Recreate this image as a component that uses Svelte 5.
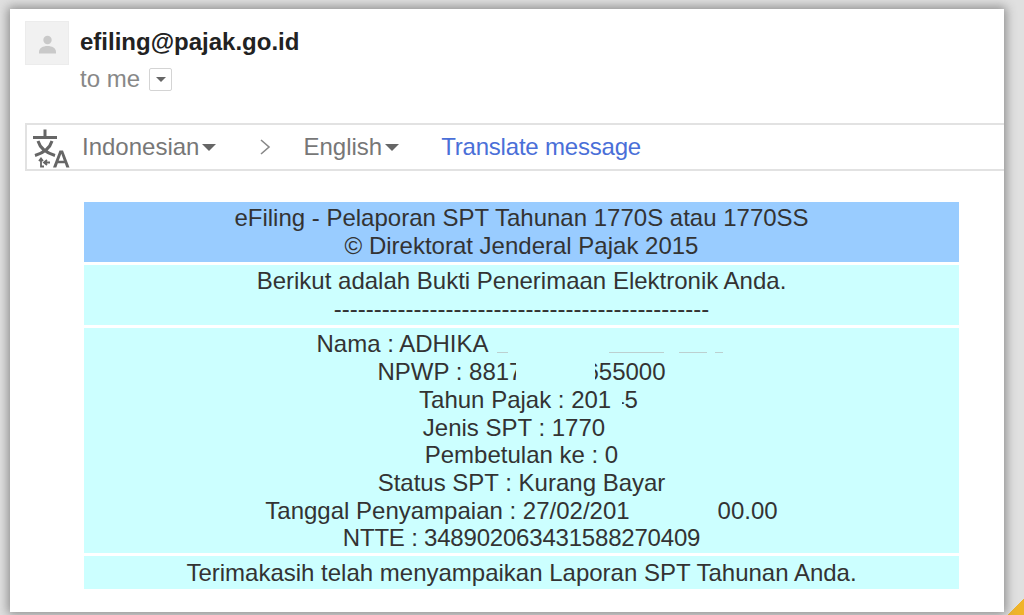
<script>
	// an object in parts is a gap left by the redaction, negative margins let it cover its neighbours
	const details = [
		{ parts: ['Nama : ADHIKA', { w: 238, tail: true }] },
		{ parts: ['NPWP : 8817', { w: 79, ml: -6, mr: -10 }, '655000'] },
		{ parts: [{ w: 14 }, 'Tahun Pajak : 201', { w: 11, mr: -11 }, '45'] },
		{ parts: ['Jenis SPT : 1770', { w: 15 }] },
		{ parts: ['Pembetulan ke : 0'] },
		{ parts: ['Status SPT : Kurang Bayar'] },
		{ parts: ['Tanggal Penyampaian : 27/02/201', { w: 88 }, '00.00'] },
		{ parts: ['NTTE : 348902063431588270409'], spacing: -0.2 }
	];
</script>

<div class="page">
	<div class="card">
		<header class="sender">
			<div class="avatar">
				<svg width="40" height="44" viewBox="0 0 40 44">
					<circle cx="20.500" cy="18" r="4.200" fill="#c9c9c9" />
					<path d="M12 30c0-4 4-6 8.500-6s8.500 2 8.500 6v1.500H12z" fill="#c9c9c9" />
				</svg>
			</div>
			<div class="who">
				<div class="from">efiling@pajak.go.id</div>
				<div class="to">
					to me
					<span class="more"><i></i></span>
				</div>
			</div>
		</header>

		<div class="translate">
			<svg class="lang-icon" width="40" height="46" viewBox="0 0 40 46">
				<g fill="none" stroke="#666" stroke-width="3">
					<path d="M3 13.500h24M15 5.500v8M8 17c2 7 9 12 17 14.500M22 17c-2 7-9 12-17 14.500" />
				</g>
				<g fill="none" stroke="#666" stroke-width="1.800">
					<path d="M11 34.500v8h3M9 37l2-2.500 2 2.500M20 38.500h-6M17 36l-3 2.500 3 2.500" />
				</g>
				<path d="M23 43.500l6.500-17h3.500l6.500 17h-3.200l-1.500-4.200h-7l-1.500 4.200zM28.700 36.800h5.100l-2.500-7z" fill="#666" />
			</svg>
			<span class="lang first">Indonesian<i class="caret"></i></span>
			<svg class="chevron" width="12" height="18" viewBox="0 0 12 18">
				<path d="M2 2l8 7-8 7" fill="none" stroke="#888" stroke-width="1.600" />
			</svg>
			<span class="lang">English<i class="caret"></i></span>
			<span class="link">Translate message</span>
		</div>

		<div class="receipt">
			<section class="head">
				<p>eFiling - Pelaporan SPT Tahunan 1770S atau 1770SS</p>
				<p>© Direktorat Jenderal Pajak 2015</p>
			</section>
			<section class="intro">
				<p>Berikut adalah Bukti Penerimaan Elektronik Anda.</p>
				<p>-----------------------------------------------</p>
			</section>
			<section class="details">
				{#each details as line}
					<p style="letter-spacing: {line.spacing ?? 0}px">
						{#each line.parts as part}{#if typeof part === 'string'}{part}{:else}<span
									class="blank"
									class:tail={part.tail}
									style="width: {part.w}px; margin-left: {part.ml ?? 0}px; margin-right: {part.mr ?? 0}px"
								></span>{/if}{/each}
					</p>
				{/each}
			</section>
			<section class="thanks">
				<p>Terimakasih telah menyampaikan Laporan SPT Tahunan Anda.</p>
			</section>
		</div>
	</div>
</div>

<style>
	:global(body) {
		background: linear-gradient(135deg, #e0e0e0 calc(100% - 12px), #f0b429 calc(100% - 12px));
		height: 615px;
		font-family: 'Liberation Sans', Arial, sans-serif;
	}
	.page {
		height: 615px;
		box-sizing: border-box;
		padding: 9px 20px 3px 10px;
		overflow: hidden;
	}
	.card {
		height: 100%;
		box-sizing: border-box;
		background: #fff;
		padding: 12px 0 0 15px;
		box-shadow: 0 0 10px 2px #8a8a8a;
	}
	.sender {
		display: flex;
		gap: 11px;
		height: 102px;
	}
	.avatar {
		width: 44px;
		height: 44px;
		background: #f1f1f1;
		border: 1px solid #ececec;
		box-sizing: border-box;
		display: flex;
		justify-content: center;
		overflow: hidden;
	}
	.from {
		font-size: 24px;
		font-weight: bold;
		color: #222;
		line-height: 26px;
		margin-top: 8px;
	}
	.to {
		display: flex;
		align-items: center;
		gap: 9px;
		font-size: 24px;
		color: #888;
		line-height: 26px;
		margin-top: 11px;
	}
	.more {
		width: 23px;
		height: 23px;
		box-sizing: border-box;
		border: 1px solid #d4d4d4;
		border-radius: 2px;
		display: flex;
		align-items: center;
		justify-content: center;
	}
	.more i {
		border: 5px solid transparent;
		border-top-color: #666;
		border-bottom: 0;
	}
	.translate {
		height: 48px;
		box-sizing: border-box;
		border: 2px solid #e2e2e2;
		border-right: 0;
		display: flex;
		align-items: center;
		font-size: 24px;
		color: #777;
	}
	.lang-icon {
		flex: none;
		margin-left: 3px;
	}
	.lang {
		display: flex;
		align-items: center;
		color: #777;
	}
	.lang.first {
		margin-left: 12px;
	}
	.caret {
		margin-left: 3px;
		border: 7px solid transparent;
		border-top: 7px solid #666;
		border-bottom: 0;
	}
	.chevron {
		margin: 0 32px 0 43px;
	}
	.link {
		margin-left: 42px;
		color: #4a6fd8;
		letter-spacing: -0.2px;
	}
	.receipt {
		margin: 31px 45px 0 59px;
		display: flex;
		flex-direction: column;
		gap: 3px;
		font-size: 24px;
		line-height: 27.7px;
		color: #333;
		text-align: center;
	}
	.receipt section {
		background: #ccffff;
	}
	.receipt p {
		margin: 0;
		white-space: nowrap;
	}
	.receipt .head {
		background: #99ccff;
		padding: 2px 0 2.600px;
	}
	.intro {
		padding: 2px 0 2.600px;
	}
	.details {
		padding: 2.400px 0 1px;
	}
	.thanks {
		padding: 3px 0 2.300px;
	}
	.blank {
		display: inline-block;
		position: relative;
		height: 25px;
		vertical-align: top;
		background: #ccffff;
	}
	/* descender remnants left under the redacted name */
	.tail {
		background:
			linear-gradient(#bcd0d0, #bcd0d0) 8px 22px / 11px 1px no-repeat,
			linear-gradient(#bcd0d0, #bcd0d0) 120px 22px / 55px 1px no-repeat,
			linear-gradient(#bcd0d0, #bcd0d0) 190px 22px / 28px 1px no-repeat,
			linear-gradient(#bcd0d0, #bcd0d0) 226px 22px / 8px 1px no-repeat;
	}
</style>
